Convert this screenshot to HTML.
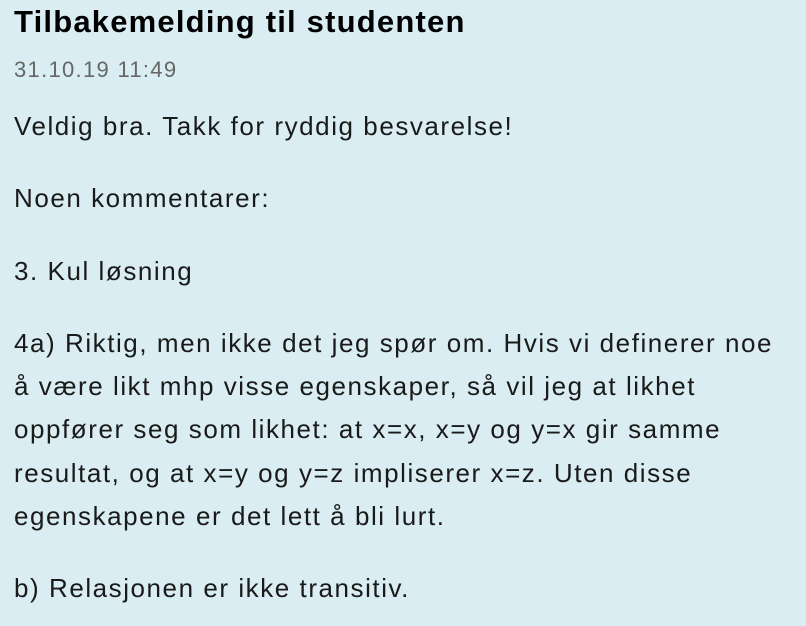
<!DOCTYPE html>
<html><head><meta charset="utf-8"><style>
html,body{margin:0;padding:0;}
body{width:806px;height:626px;background:#d9edf2;font-family:"Liberation Sans",sans-serif;color:#1a1a1a;overflow:hidden;position:relative;}
.t{position:absolute;left:14px;top:4px;font-size:31px;font-weight:bold;color:#000;white-space:nowrap;letter-spacing:1.2px;}
.d{position:absolute;left:14px;top:57px;font-size:22px;color:#666;letter-spacing:1.3px;}
.p{position:absolute;left:14px;font-size:26px;line-height:43.2px;white-space:nowrap;letter-spacing:1.55px;}
</style></head><body>
<div class="t">Tilbakemelding til studenten</div>
<div class="d">31.10.19 11:49</div>
<div class="p" style="top:105px">Veldig bra. Takk for ryddig besvarelse!</div>
<div class="p" style="top:177px">Noen kommentarer:</div>
<div class="p" style="top:250px">3. Kul løsning</div>
<div class="p" style="top:322px">4a) Riktig, men ikke det jeg spør om. Hvis vi definerer noe<br>å være likt mhp visse egenskaper, så vil jeg at likhet<br>oppfører seg som likhet: at x=x, x=y og y=x gir samme<br>resultat, og at x=y og y=z impliserer x=z. Uten disse<br>egenskapene er det lett å bli lurt.</div>
<div class="p" style="top:567px">b) Relasjonen er ikke transitiv.</div>
</body></html>
